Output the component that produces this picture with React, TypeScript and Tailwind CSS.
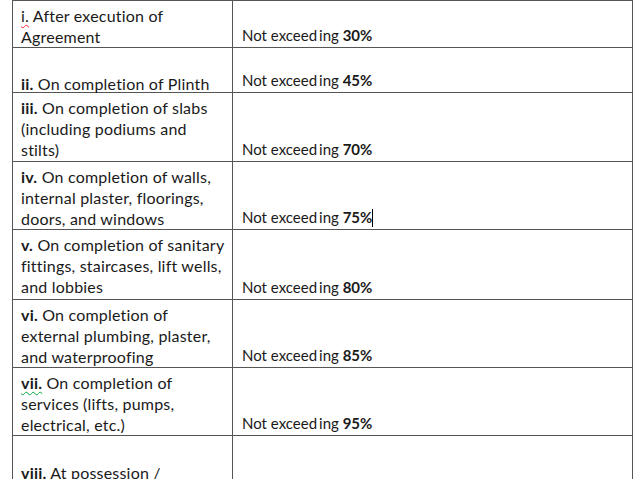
import React from "react";

type Row = {
  num: string;
  lines: string[];
  pct: string;
  h: string;
  mark?: "red" | "green";
  caret?: boolean;
};

const rows: Row[] = [
  { num: "i.", lines: ["After execution of", "Agreement"], pct: "30%", h: "h-[47px]", mark: "red" },
  { num: "ii.", lines: ["", "On completion of Plinth"], pct: "45%", h: "h-[45px]" },
  { num: "iii.", lines: ["On completion of slabs", "(including podiums and", "stilts)"], pct: "70%", h: "h-[69px]" },
  { num: "iv.", lines: ["On completion of walls,", "internal plaster, floorings,", "doors, and windows"], pct: "75%", h: "h-[68px]", caret: true },
  { num: "v.", lines: ["On completion of sanitary", "fittings, staircases, lift wells,", "and lobbies"], pct: "80%", h: "h-[70px]" },
  { num: "vi.", lines: ["On completion of", "external plumbing, plaster,", "and waterproofing"], pct: "85%", h: "h-[68px]" },
  { num: "vii.", lines: ["On completion of", "services (lifts, pumps,", "electrical, etc.)"], pct: "95%", h: "h-[68px]", mark: "green" },
];

const Num = ({ r }: { r: Row }) => {
  if (r.mark === "red")
    return <span className="underline decoration-wavy decoration-red-500 decoration-1 underline-offset-2">{r.num}</span>;
  if (r.mark === "green")
    return (
      <span className="font-bold underline decoration-wavy decoration-green-600 decoration-1 underline-offset-2">
        {r.num}
      </span>
    );
  return <span className="font-bold">{r.num}</span>;
};

const App = () => {
  return (
    <div
      className="w-[640px] h-[479px] overflow-hidden bg-white text-[15px] leading-[21px] text-[#1a1a1a]"
      style={{ fontFamily: "Lato, 'Open Sans', sans-serif" }}
    >
      <div className="ml-[12px] w-[621px] border-l border-r border-t border-[#555]">
        {rows.map((r, i) => {
          const first = r.lines.findIndex((l) => l !== "");
          return (
            <div key={i} className={`flex border-b border-[#555] ${r.h}`}>
              {/* description */}
              <div className="w-[220px] shrink-0 border-r border-[#555] pl-[8px] pt-[4px] text-[16px] tracking-[0.2px]">
                {r.lines.map((l, j) => (
                  <div key={j} className="h-[21px] whitespace-nowrap">
                    {j === first ? (
                      <>
                        <Num r={r} /> {l}
                      </>
                    ) : (
                      l
                    )}
                  </div>
                ))}
              </div>
              {/* limit */}
              <div className="flex-1 flex items-end pl-[9px] pb-[1px]">
                <span className="whitespace-nowrap">
                  Not exceed<span className="ml-[2px]">ing</span> <span className="font-bold">{r.pct}</span>
                  {r.caret && <span className="inline-block w-[1px] h-[18px] bg-black align-[-4px]" />}
                </span>
              </div>
            </div>
          );
        })}
        <div className="flex h-[60px]">
          <div className="w-[220px] shrink-0 border-r border-[#555] pl-[8px] pt-[26px] text-[16px] tracking-[0.2px]">
            <span className="font-bold">viii.</span> At possession /
          </div>
          <div className="flex-1" />
        </div>
      </div>
    </div>
  );
};

export default App;
